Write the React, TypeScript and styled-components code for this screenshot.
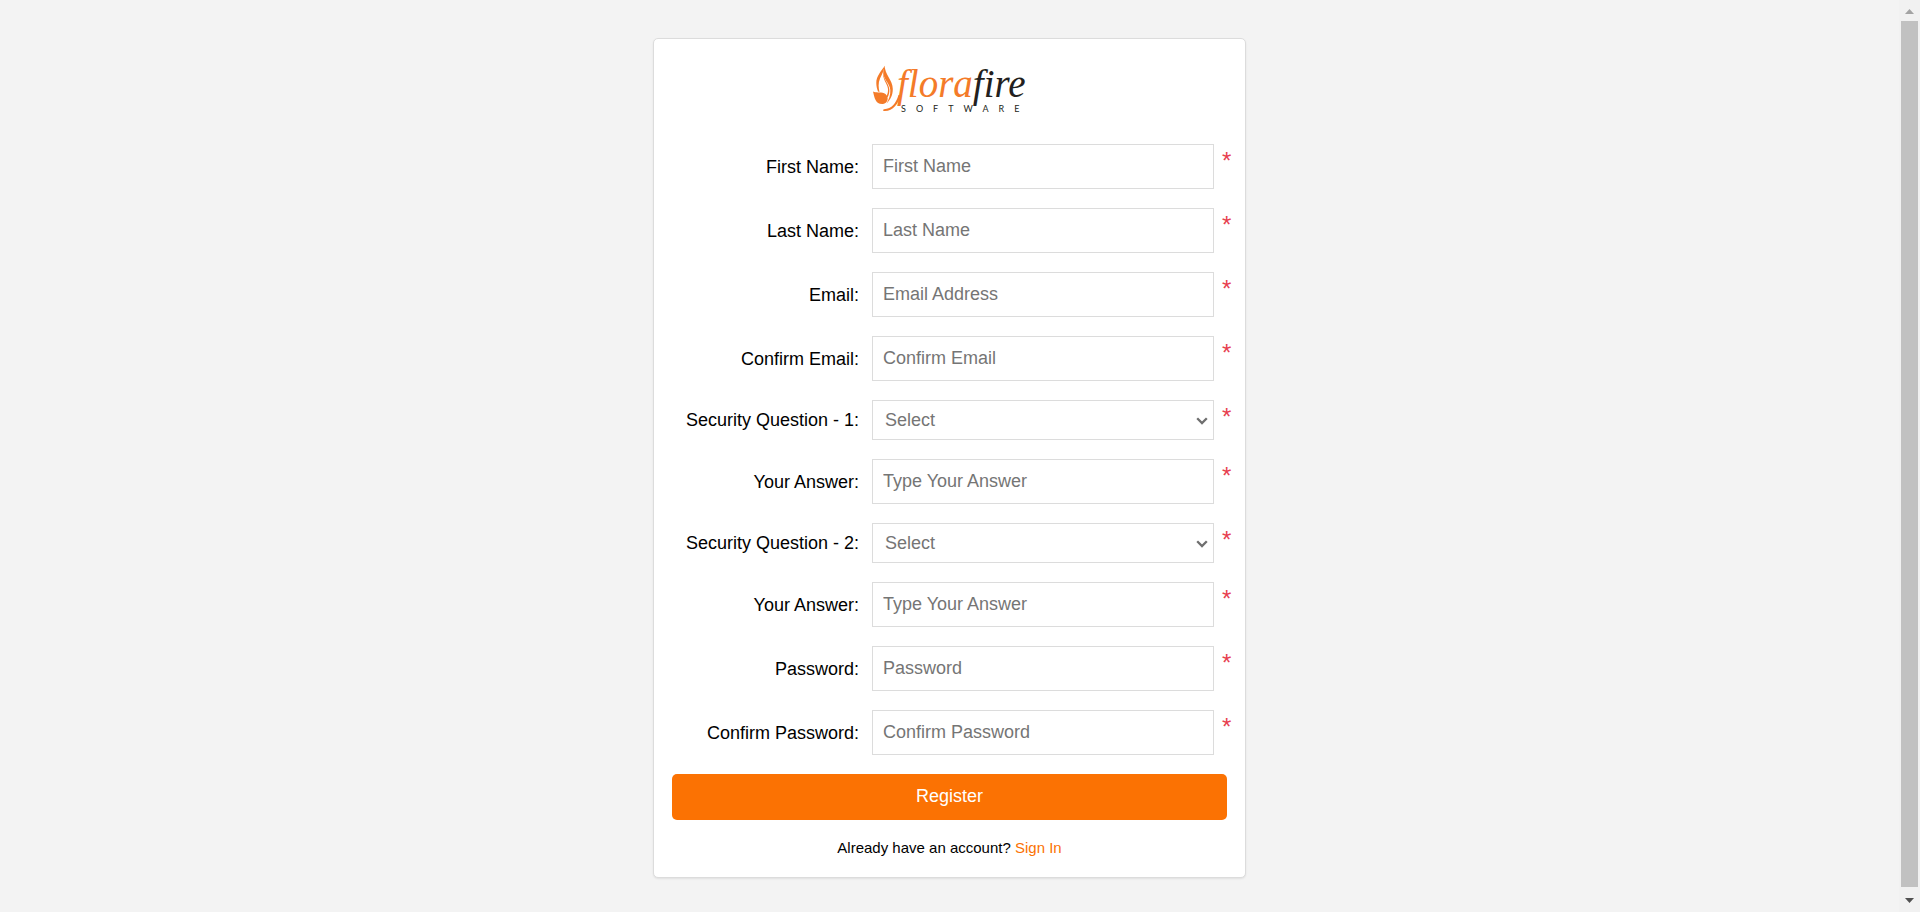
import React from "react";
import styled, { createGlobalStyle } from "styled-components";

const GlobalStyle = createGlobalStyle`
  *, *::before, *::after { box-sizing: border-box; }
  body {
    margin: 0;
    background: #f3f3f3;
    color: #000;
    font-family: Arial, "Liberation Sans", sans-serif;
    font-size: 18px;
    line-height: 20px;
  }
`;

const Page = styled.div`
  display: flex;
  height: 100vh;
`;

const Content = styled.main`
  flex: 1;
  min-width: 0;
  overflow: auto;
  scrollbar-width: none;
  padding: 38px 16px 34px;
`;

const Card = styled.section`
  max-width: 593px;
  margin: 0 auto;
  padding: 24px 0 19px;
  background: #fff;
  border: 1px solid #dcdcdc;
  border-radius: 5px;
  box-shadow: 0 1px 2px rgba(0, 0, 0, 0.08);
`;

const Logo = styled.svg`
  display: block;
  width: 160px;
  height: 56px;
  margin: 0 auto 25px;
  overflow: visible;
`;

const Form = styled.form`
  display: flex;
  flex-direction: column;
  gap: 19px;
`;

const Row = styled.div`
  display: grid;
  grid-template-columns: minmax(0, 1fr) minmax(0, 342px) 18px;
  align-items: center;
  padding: 0 13px 0 18px;
`;

const Label = styled.label`
  padding-right: 13px;
  text-align: right;
`;

const control = `
  display: block;
  width: 100%;
  margin: 0;
  border: 1px solid #dcdcdc;
  border-radius: 0;
  background: #fff;
  font: inherit;
`;

const TextInput = styled.input`
  ${control}
  height: 45px;
  padding: 0 10px;
  &::placeholder { color: #757575; opacity: 1; }
`;

const SelectBox = styled.div`
  position: relative;
`;

const Select = styled.select`
  ${control}
  height: 40px;
  padding: 0 30px 0 12px;
  color: #757575;
  appearance: none;
`;

const Chevron = styled.svg`
  position: absolute;
  top: 17px;
  right: 6px;
  width: 12px;
  height: 8px;
  pointer-events: none;
`;

const Required = styled.span`
  align-self: start;
  padding: 5px 0 0 8px;
  color: #e7404f;
  font-size: 24px;
  line-height: 24px;
`;

const RegisterButton = styled.button`
  height: 46px;
  margin: 0 18px;
  padding: 0 0 2px;
  border: 0;
  border-radius: 5px;
  background: #fb7203;
  color: #fff;
  font: inherit;
  cursor: pointer;
`;

const SignInLine = styled.p`
  margin: 18px 0 0;
  text-align: center;
  font-size: 15px;
`;

const SignInLink = styled.a`
  color: #fb7203;
  text-decoration: none;
`;

const ScrollRail = styled.div`
  display: flex;
  flex-direction: column;
  align-items: center;
  width: 21px;
  background: #f1f1f1;
`;

const ScrollArrow = styled.svg`
  flex: none;
  width: 21px;
  height: 21px;
`;

const ScrollThumb = styled.div`
  flex: 1;
  width: 17px;
  margin-bottom: 4px;
  background: #c1c1c1;
`;

type Field = {
  id: string;
  label: string;
  placeholder?: string;
  type?: string;
};

const fields: Field[] = [
  { id: "first-name", label: "First Name:", placeholder: "First Name" },
  { id: "last-name", label: "Last Name:", placeholder: "Last Name" },
  { id: "email", label: "Email:", placeholder: "Email Address", type: "email" },
  { id: "confirm-email", label: "Confirm Email:", placeholder: "Confirm Email", type: "email" },
  { id: "question-1", label: "Security Question - 1:", type: "select" },
  { id: "answer-1", label: "Your Answer:", placeholder: "Type Your Answer" },
  { id: "question-2", label: "Security Question - 2:", type: "select" },
  { id: "answer-2", label: "Your Answer:", placeholder: "Type Your Answer" },
  { id: "password", label: "Password:", placeholder: "Password", type: "password" },
  { id: "confirm-password", label: "Confirm Password:", placeholder: "Confirm Password", type: "password" },
];

function FieldRow({ id, label, placeholder, type = "text" }: Field) {
  return (
    <Row>
      <Label htmlFor={id}>{label}</Label>
      {type === "select" ? (
        <SelectBox>
          <Select id={id} required>
            <option value="">Select</option>
          </Select>
          <Chevron viewBox="0 0 12 8" aria-hidden="true">
            <path d="M1.2 1.2 6 6l4.800-4.800" fill="none" stroke="#6f6f6f" strokeWidth="2.300" />
          </Chevron>
        </SelectBox>
      ) : (
        <TextInput id={id} type={type} placeholder={placeholder} required />
      )}
      <Required aria-hidden="true">*</Required>
    </Row>
  );
}

function FlorafireLogo() {
  return (
    <Logo viewBox="0 0 160 56" role="img" aria-label="florafire software">
      {/* flame outline, then the leaf at its foot */}
      <g fill="#f47b29">
        <path d="M14.800 2.700C12 7 6 13 6.300 20c0 3 .7 6 1.700 8.500l1.500.5C8.500 25 8 20 10 15.500c2-4.500 3.800-7.500 4.800-12.800Z" />
        <path d="M14.800 2.700C14.500 11 22.800 17 22.800 26c0 7-2.800 11-6.300 14.500 2.500-4.500 4.100-8.500 3.800-13.500C20 20 12.500 16 13.300 8Z" />
        <path d="M13.300 8C12 17 17.500 20 18 26c.2 3-.5 5-1.500 7l1 1.500C19 32 19.600 29 19.300 26 18.500 20 13 16 13.300 8Z" />
        <path d="M3 28.500c4 2 9-.5 12.500 2.500 4 3.500 2 9.500-2.500 10C5.500 41.500 4.500 35 3 28.500Z" />
      </g>
      {/* tail swash under the wordmark */}
      <path
        d="M31 32C28 41 23 48.500 14 48c-1 0-1.500-1.500 0-1.800C22 46 26 40 28.500 32Z"
        fill="#f47b29"
      />
      <text x="27" y="34" fontFamily="'Liberation Serif', serif" fontStyle="italic" fontSize="39" fill="#f47b29">
        flora<tspan fill="#231f20">fire</tspan>
      </text>
      <text x="31" y="49" fontFamily="Lato, sans-serif" fontSize="9" letterSpacing="10" fill="#231f20">
        SOFTWARE
      </text>
    </Logo>
  );
}

export default function App() {
  return (
    <>
      <GlobalStyle />
      <Page>
        <Content>
          <Card>
            <FlorafireLogo />
            <Form onSubmit={(event: React.FormEvent) => event.preventDefault()}>
              {fields.map((field) => (
                <FieldRow key={field.id} {...field} />
              ))}
              <RegisterButton type="submit">Register</RegisterButton>
            </Form>
            <SignInLine>
              Already have an account? <SignInLink href="#sign-in">Sign In</SignInLink>
            </SignInLine>
          </Card>
        </Content>
        <ScrollRail aria-hidden="true">
          <ScrollArrow viewBox="0 0 21 21">
            <path d="M6 14h9l-4.500-5Z" fill="#a3a3a3" />
          </ScrollArrow>
          <ScrollThumb />
          <ScrollArrow viewBox="0 0 21 21">
            <path d="M6 7h9l-4.500 5Z" fill="#505050" />
          </ScrollArrow>
        </ScrollRail>
      </Page>
    </>
  );
}
